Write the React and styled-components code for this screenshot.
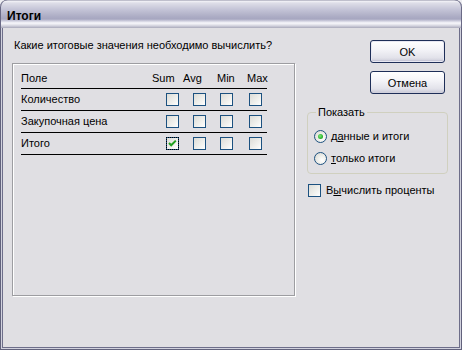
import React from "react";
import styled, { createGlobalStyle, css } from "styled-components";

const GlobalStyle = createGlobalStyle`
  html, body {
    margin: 0;
    padding: 0;
    background: #eeeef2;
  }
  body {
    font-family: "Liberation Sans", Arial, sans-serif;
    font-size: 11px;
    color: #000;
  }
`;

const Window = styled.div`
  width: 462px;
  height: 350px;
  box-sizing: border-box;
  display: flex;
  flex-direction: column;
  background: #e0dfe3;
  border-radius: 7px 7px 0 0;
  overflow: hidden;
  box-shadow: inset 0 0 0 1px #62627c, inset 0 0 0 2px #d2d2de,
    inset 0 0 0 3px #6e6e8a;
`;

const TitleBar = styled.div`
  flex: none;
  height: 28px;
  box-sizing: border-box;
  display: flex;
  align-items: center;
  padding: 3px 0 0 7px;
  border-radius: 7px 7px 0 0;
  background: linear-gradient(
    to bottom,
    #8a8aa0 0px,
    #f4f4f8 1px,
    #dedee8 3px,
    #c6c6d8 9px,
    #aeaec6 16px,
    #a6a6c0 19px,
    #cfcfde 21px,
    #f8f8fc 23px,
    #e0e0e8 25px,
    #bdbdcc 27px,
    #a8a8b8 28px
  );
  box-shadow: inset 1px 0 0 #6a6a86, inset -1px 0 0 #6a6a86;
`;

const TitleText = styled.span`
  font-family: "Liberation Sans", Arial, sans-serif;
  font-weight: bold;
  font-size: 12px;
  color: #000;
`;

const Body = styled.div`
  flex: 1;
  margin: 0 3px 3px;
  display: flex;
  align-items: flex-start;
`;

const LeftColumn = styled.div`
  display: flex;
  flex-direction: column;
  margin-left: 9px;
  padding-top: 11px;
`;

const Prompt = styled.div`
  line-height: 13px;
  padding-left: 2px;
  margin-bottom: 11px;
`;

const Panel = styled.div`
  width: 283px;
  height: 233px;
  box-sizing: border-box;
  border: 1px solid #9d9da1;
  box-shadow: 1px 1px 0 #ffffff, inset 1px 1px 0 #ffffff;
  padding: 5px 0 0 8px;
`;

const Table = styled.div`
  width: 246px;
  display: flex;
  flex-direction: column;
`;

const Row = styled.div`
  display: grid;
  grid-template-columns: 131px 31px 34px 30px 20px;
  align-items: center;
  height: ${(p) => (p.$header ? 19 : 21)}px;
  border-bottom: 1px solid #000;
  line-height: 13px;
`;

const Cell = styled.div`
  display: flex;
  align-items: center;
  padding-left: ${(p) => p.$offset || 0}px;
  white-space: nowrap;
`;

const Box = styled.span`
  position: relative;
  display: inline-block;
  width: 13px;
  height: 13px;
  box-sizing: border-box;
  border: 1px solid #1c5180;
  background: linear-gradient(135deg, #dcdcd7 0%, #f2f2ef 65%, #ffffff 100%);
  flex: none;
  ${(p) =>
    p.$focused &&
    css`
      outline: 1px dotted #000;
      outline-offset: -1px;
    `}
  svg {
    display: block;
  }
`;

const RightColumn = styled.div`
  width: 141px;
  margin-left: 12px;
  padding-top: 12px;
  display: flex;
  flex-direction: column;
`;

const Button = styled.button`
  align-self: flex-end;
  margin-right: 3px;
  width: 75px;
  height: 23px;
  margin-bottom: 8px;
  box-sizing: border-box;
  border: 1px solid #1e2e58;
  border-radius: 3px;
  background: linear-gradient(to bottom, #ffffff 0%, #f4f4f8 40%, #e2e2ea 80%, #c8c8d6 100%);
  box-shadow: inset 0 -1px 0 #d0d0dc;
  font-family: "Liberation Sans", Arial, sans-serif;
  font-size: 11px;
  color: #000;
  padding: 0;
  ${(p) =>
    p.$default &&
    css`
      box-shadow: inset 0 0 0 1px #e8e8f2, inset 0 -2px 0 #c8c8d8;
    `}
`;

const Group = styled.fieldset`
  margin: 4px 0 0 0;
  padding: 6px 7px 4px 7px;
  border: 1px solid #d0d0bf;
  border-radius: 4px;
  min-width: 0;
  display: flex;
  flex-direction: column;
`;

const Legend = styled.legend`
  margin-left: 1px;
  padding: 0 2px;
  line-height: 13px;
`;

const OptionRow = styled.label`
  display: flex;
  align-items: center;
  height: 22px;
  gap: 4px;
  line-height: 13px;
`;

const Radio = styled.span`
  display: inline-flex;
  align-items: center;
  justify-content: center;
  width: 13px;
  height: 13px;
  box-sizing: border-box;
  margin-left: -1px;
  border-radius: 50%;
  border: 1px solid #1c5180;
  background: radial-gradient(circle at 65% 65%, #ffffff 0%, #f0f0ec 40%, #d4d4ce 100%);
  flex: none;
  &::after {
    content: "";
    display: ${(p) => (p.$checked ? "block" : "none")};
    width: 5px;
    height: 5px;
    border-radius: 50%;
    background: radial-gradient(circle at 40% 40%, #7ce87c 0%, #2fb52f 60%, #1a8f1a 100%);
  }
`;

const CheckRow = styled.label`
  display: flex;
  align-items: center;
  gap: 5px;
  margin-top: 10px;
  padding-left: 1px;
  line-height: 13px;
`;

const Key = styled.u`
  text-decoration: underline;
`;

const CheckMark = () => (
  <svg width="11" height="11" viewBox="0 0 11 11">
    <path d="M2 5 L4.2 7.3 L8.8 2.6" fill="none" stroke="#21a121" strokeWidth="2" />
  </svg>
);

const Checkbox = ({ checked, focused }) => (
  <Box $focused={focused}>{checked && <CheckMark />}</Box>
);

const columns = [
  { name: "Sum", offset: 14 },
  { name: "Avg", offset: 10 },
  { name: "Min", offset: 3 },
  { name: "Max", offset: 2 },
];

const rows = [
  { label: "Количество", checks: [false, false, false, false] },
  { label: "Закупочная цена", checks: [false, false, false, false] },
  { label: "Итого", checks: [true, false, false, false], focus: 0 },
];

export default function App() {
  return (
    <>
      <GlobalStyle />
      <Window>
        <TitleBar>
          <TitleText>Итоги</TitleText>
        </TitleBar>
        <Body>
          <LeftColumn>
            <Prompt>Какие итоговые значения необходимо вычислить?</Prompt>
            <Panel>
              <Table>
                <Row $header>
                  <Cell>Поле</Cell>
                  {columns.map((c) => (
                    <Cell key={c.name}>{c.name}</Cell>
                  ))}
                </Row>
                {rows.map((r) => (
                  <Row key={r.label}>
                    <Cell>{r.label}</Cell>
                    {r.checks.map((ch, i) => (
                      <Cell key={i} $offset={columns[i].offset}>
                        <Checkbox checked={ch} focused={r.focus === i} />
                      </Cell>
                    ))}
                  </Row>
                ))}
              </Table>
            </Panel>
          </LeftColumn>
          <RightColumn>
            <Button $default>OK</Button>
            <Button>Отмена</Button>
            <Group>
              <Legend>Показать</Legend>
              <OptionRow>
                <Radio $checked />
                <span>
                  д<Key>а</Key>нные и итоги
                </span>
              </OptionRow>
              <OptionRow>
                <Radio />
                <span>
                  <Key>т</Key>олько итоги
                </span>
              </OptionRow>
            </Group>
            <CheckRow>
              <Checkbox />
              <span>
                В<Key>ы</Key>числить проценты
              </span>
            </CheckRow>
          </RightColumn>
        </Body>
      </Window>
    </>
  );
}
